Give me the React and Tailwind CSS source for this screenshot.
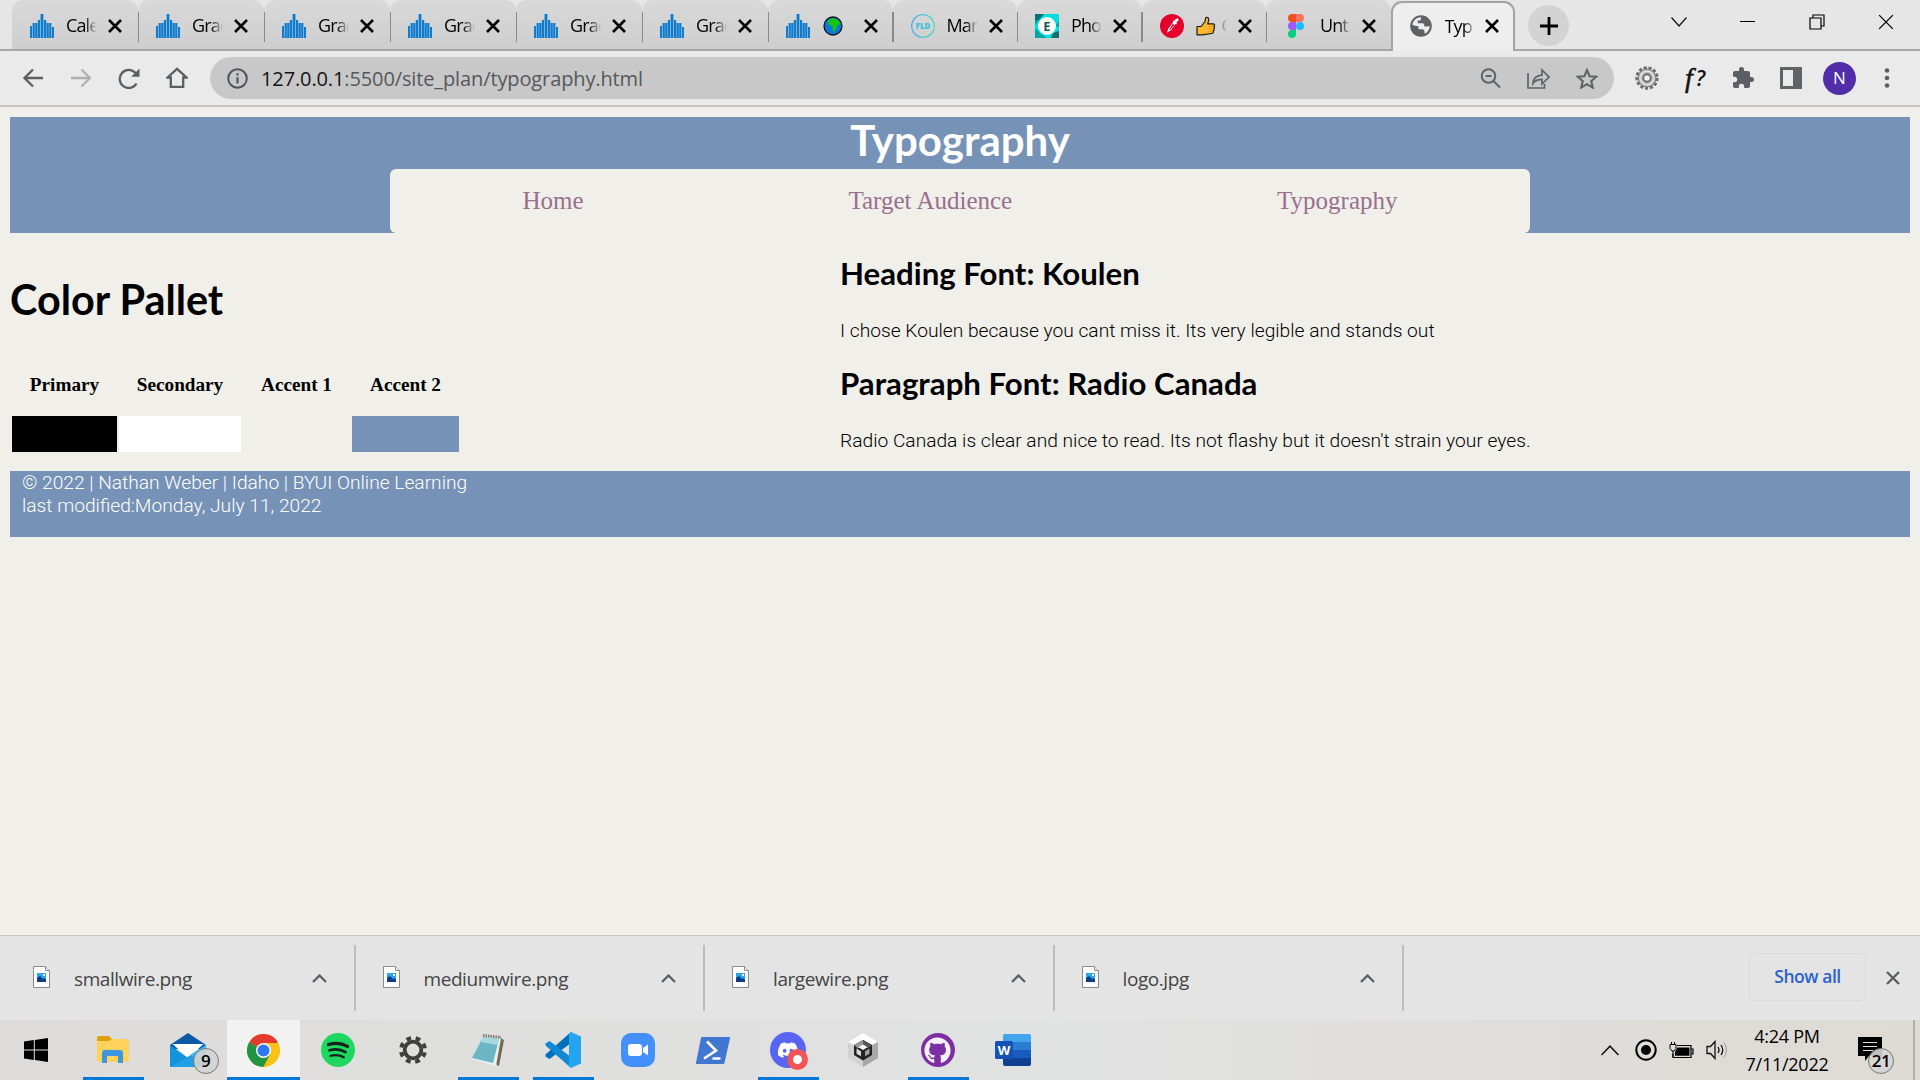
import React from "react";
import { FaGithub, FaDiscord } from "react-icons/fa";

const seg = "font-['Open_Sans','Noto_Sans',sans-serif]";

function CanvasBars() {
  return (
    <svg width="24" height="24" viewBox="0 0 24 24" fill="#0d7ccf">
      <path d="M0 12h2v12H0zM2.6 9h2.2v15H2.6zM5.2 9h2.2v15H5.2zM7.8 6h2.2v18H7.8zM10.6 0h2.8v24h-2.8zM14 6h2.2v18H14zM16.6 9h2.2v15h-2.2zM19.2 9h2.2v15h-2.2zM22 13h2v11h-2z" />
    </svg>
  );
}

function Globe() {
  return (
    <svg className="ml-[1px]" width="20" height="20" viewBox="0 0 20 20">
      <circle cx="10" cy="10" r="9" fill="#0b78d8" stroke="#111" strokeWidth="1.3" />
      <path d="M6 3.5l4-1.5 5 2 2.5 4-3 1-1 3-2.5 4-1.5-2V10L6 9 5 6z" fill="#16c60c" />
    </svg>
  );
}

function Fld() {
  return (
    <svg width="24" height="24" viewBox="0 0 24 24">
      <defs>
        <linearGradient id="fld">
          <stop stopColor="#4ea8ee" />
          <stop offset="1" stopColor="#46e0b8" />
        </linearGradient>
      </defs>
      <circle cx="12" cy="12" r="11.3" fill="none" stroke="url(#fld)" strokeWidth="1.3" />
      <text x="12" y="14.8" textAnchor="middle" fontSize="8" fontWeight="800" fontFamily="Open Sans" fill="#43c0dc">FLD</text>
    </svg>
  );
}

function EIcon() {
  return (
    <svg width="24" height="24" viewBox="0 0 24 24">
      <path fill="#00e0e0" d="M0 0h24v24H0z" />
      <path fill="#0f6e70" d="M0 0h9L4 6l-4 1zM24 24h-8l2-5 6-2z" />
      <path fill="#00a6a2" d="M0 7v4l4-4zM0 14v10h12l-6-4zM20 12l4-5v6z" />
      <circle cx="12" cy="12" r="9" fill="#fff" />
      <text x="12" y="16.600" textAnchor="middle" fontSize="13" fontWeight="700" fontFamily="Open Sans" fill="#17595b">E</text>
    </svg>
  );
}

function Dropper() {
  return (
    <svg width="24" height="24" viewBox="0 0 24 24">
      <circle cx="12" cy="12" r="12" fill="#e4002b" />
      <path d="M18.5 4.800c-1.500-.8-3 0-4 2l-1-.3-.8 1.200.6.6-4.600 5.600-1.900 4.800 4.400-2.700 4.300-6 .7.5.8-1.300-.6-.8c1.500-.9 2.600-2.200 2.100-3.600z" fill="#fff" />
      <path d="M12.800 9.800l1.600 1.200-4 4.600-1.400.6z" fill="#e4002b" />
    </svg>
  );
}

function Thumb() {
  return (
    <svg className="shrink-0" width="20" height="20" viewBox="0 0 20 20">
      <path d="M1 10.500h4.200L9 5.500 9.800 1.500c1.800-.8 3.200.6 2.900 2.600l-.9 3.700h5.400c1.600 0 1.800 2 .7 2.600.9.700.7 2-.2 2.400.7.800.4 1.900-.4 2.300.3 1.300-.3 2.300-1.800 2.400L6.500 18.800H1z" fill="#fdb92e" stroke="#1a1a1a" strokeWidth="1.200" strokeLinejoin="round" />
      <path d="M12.500 10.500h5M12.500 13h5M12.500 15.400h4.500" stroke="#d9861b" strokeWidth=".7" />
    </svg>
  );
}

function Figma() {
  return (
    <svg width="16" height="24" viewBox="0 0 16 24">
      <path d="M4 0h4v8H4a4 4 0 010-8z" fill="#f24e1e" />
      <path d="M8 0h4a4 4 0 010 8H8z" fill="#ff7262" />
      <path d="M4 8h4v8H4a4 4 0 010-8z" fill="#a259ff" />
      <circle cx="12" cy="12" r="4" fill="#1abcfe" />
      <path d="M4 16h4v4a4 4 0 11-4-4z" fill="#0acf83" />
    </svg>
  );
}

function Earth() {
  return (
    <svg className="shrink-0" width="26" height="26" viewBox="0 0 24 24" fill="#5f6368">
      <path d="M12 2C6.480 2 2 6.480 2 12s4.480 10 10 10 10-4.480 10-10S17.520 2 12 2zm8 10c0 3-1.800 5.800-4.500 7.200l-.4-2.600c-.1-.9-.9-1.600-1.800-1.600H11c-.8 0-1.500-.7-1.500-1.500V12H7.200L4.100 10.800C4.700 7 8 4 12 4v1.500c0 .8-.7 1.500-1.500 1.500H9v2.500h4.500c.8 0 1.500.7 1.500 1.500v1.500h2.500c.9 0 1.600-.4 2.500-.5z" />
    </svg>
  );
}

function Cross({ size = 14, w = 2.6, color = "#000" }) {
  return (
    <svg width={size} height={size} viewBox="0 0 14 14" stroke={color} strokeWidth={w} fill="none">
      <path d="M1 1l12 12M13 1L1 13" />
    </svg>
  );
}

function Tab({ icon, label, wide, last, active }) {
  return (
    <div
      className={
        (wide ? "w-[126px]" : "w-[124.5px]") +
        " relative flex shrink-0 items-center rounded-t-[11px] " +
        (active
          ? "z-10 mt-[1px] h-[50px] border-2 border-b-0 border-[#a3a3a3] bg-[#eeeeee] pb-[2px] pl-4"
          : "h-[49px] bg-linear-to-b from-[#d9d9d9] to-[#cecece] pl-[18px] pt-[2px]")
      }
    >
      <span className="flex w-6 shrink-0 justify-center">{icon}</span>
      <span className={seg + " ml-3 w-[31px] overflow-hidden whitespace-nowrap text-[18px] tracking-[-0.9px] text-black [mask-image:linear-gradient(to_right,black_60%,transparent)]"}>
        {label}
      </span>
      <span className={active ? "ml-[9px] flex" : "ml-[11px] flex"}>
        <Cross />
      </span>
      {!active && !last && <span className="absolute -right-[1px] top-3 z-10 h-[30px] w-[1.5px] bg-[#8a8a8a]" />}
    </div>
  );
}

function TabStrip() {
  return (
    <div className="relative flex h-[51px] bg-[#e6e6e6] pl-3">
      <div className="absolute inset-x-0 bottom-0 h-[2px] bg-[#a5a5a5]" />
      <Tab wide icon={<CanvasBars />} label="Cale" />
      <Tab wide icon={<CanvasBars />} label="Grad" />
      <Tab wide icon={<CanvasBars />} label="Grad" />
      <Tab wide icon={<CanvasBars />} label="Grad" />
      <Tab wide icon={<CanvasBars />} label="Grad" />
      <Tab wide icon={<CanvasBars />} label="Grad" />
      <Tab icon={<CanvasBars />} label={<Globe />} />
      <Tab icon={<Fld />} label="Mar" />
      <Tab icon={<EIcon />} label="Pho" />
      <Tab icon={<Dropper />} label={<span className="flex items-center gap-[6px]"><Thumb />C</span>} />
      <Tab last icon={<Figma />} label="Unt" />
      <Tab active icon={<Earth />} label="Typ" />
      <div className="ml-[13px] mt-[5px] flex size-[41px] items-center justify-center rounded-full bg-[#d3d3d3]">
        <svg width="18" height="18" viewBox="0 0 18 18" stroke="#000" strokeWidth="2.800"><path d="M9 0v18M0 9h18" /></svg>
      </div>
      <div className="ml-auto flex h-[43px] items-center">
        <span className="flex w-[69px] justify-center"><svg width="16" height="10" viewBox="0 0 16 10" fill="none" stroke="#111" strokeWidth="1.200"><path d="M.5.5L8 9 15.500.5" /></svg></span>
        <span className="flex w-[69px] justify-center"><span className="h-[1px] w-[15px] bg-black" /></span>
        <span className="flex w-[69px] justify-center"><svg width="16" height="16" viewBox="0 0 16 16" fill="none" stroke="#000" strokeWidth="1.200"><path d="M1 4h11v11H1zM4 4V1h11v11h-3" /></svg></span>
        <span className="flex w-[69px] justify-center"><Cross size={16} w={1.1} /></span>
      </div>
    </div>
  );
}

function Toolbar() {
  return (
    <div className="flex h-[56px] items-center border-b-2 border-[#c6c7c6] bg-[#eaeaea]">
      <svg className="ml-[22px]" width="22" height="20" viewBox="0 0 22 20" fill="none" stroke="#5b5f64" strokeWidth="2.300"><path d="M21 10H3M11 1.500L2.500 10l8.500 8.500" /></svg>
      <svg className="ml-[27px]" width="22" height="20" viewBox="0 0 22 20" fill="none" stroke="#b0b0b0" strokeWidth="2.300"><path d="M0 10h18M10.500 1.500L19 10l-8.500 8.500" /></svg>
      <svg className="ml-[25px]" width="22" height="21" viewBox="0 0 22 21" fill="none" stroke="#5b5f64" strokeWidth="2.300"><path d="M18.500 15.500A9 9 0 1117.500 5" /><path d="M21.500.5v8.300h-8.300z" fill="#5b5f64" stroke="none" /></svg>
      <svg className="ml-[26px]" width="22" height="22" viewBox="0 0 22 22" fill="none" stroke="#5b5f64" strokeWidth="2.300"><path d="M1.500 10.500L11 1.800l9.500 8.700h-3.300v9.300H4.800v-9.300z" /></svg>
      <div className="ml-[22px] flex h-[42px] w-[1404px] items-center rounded-full bg-[#c8c8c8] pl-[17px]">
        <svg width="21" height="21" viewBox="0 0 21 21" fill="none" stroke="#505458" strokeWidth="2"><circle cx="10.500" cy="10.500" r="9.300" /><path d="M10.500 9.300v6.200M10.500 5.200v2.300" strokeWidth="2.200" /></svg>
        <span className={seg + " ml-[13px] whitespace-nowrap pt-[1px] text-[20px] tracking-[-0.120px] text-[#55585c]"}><span className="text-[#151515]">127.0.0.1</span>:5500/site_plan/typography.html</span>
        <div className="ml-auto flex items-center gap-[26px] pr-4 text-[#5f6368]">
          <svg width="21" height="21" viewBox="0 0 21 21" fill="none" stroke="currentColor" strokeWidth="2"><circle cx="8.500" cy="8" r="6.800" /><path d="M13.500 13l6.500 6.500M5.500 8h6" /></svg>
          <svg width="23" height="21" viewBox="0 0 23 21" fill="none" stroke="currentColor" strokeWidth="1.700"><path d="M1 5v15h16.500v-4M6 15.500c.4-5.500 3.500-8 9-8.300V2l7 7-7 7v-4.600c-4 0-6.800 1-9 4.100z" /></svg>
          <svg width="22" height="21" viewBox="0 0 22 21" fill="none" stroke="currentColor" strokeWidth="2.100"><path d="M11 2l2.600 6.200 6.700.5-5.100 4.400 1.600 6.500L11 16.200l-5.800 3.400 1.600-6.500-5.100-4.400 6.700-.5z" /></svg>
        </div>
      </div>
      <svg className="ml-[21px]" width="24" height="24" viewBox="0 0 24 24">
        <circle cx="12" cy="12" r="10" fill="none" stroke="#6c6c6c" strokeWidth="3.400" strokeDasharray="3 1.833" />
        <circle cx="12" cy="12" r="9" fill="#b0b0b0" stroke="#777" />
        <circle cx="12" cy="12" r="6.800" fill="none" stroke="#e0e0e0" strokeWidth="1.800" />
        <circle cx="12" cy="12" r="3.600" fill="#f2f2f2" stroke="#666" strokeWidth="1.600" />
      </svg>
      <span className="ml-[23px] flex w-[26px] items-center justify-center gap-[3px] whitespace-nowrap leading-none text-[#111]"><i className="font-['Liberation_Serif',serif] text-[28px] [-webkit-text-stroke:0.5px_#111]">f</i><span className="font-['Open_Sans',sans-serif] text-[21px] font-semibold italic">?</span></span>
      <svg className="ml-[23px]" width="24" height="24" viewBox="0 0 24 24" fill="#5b5f64"><path d="M20.500 11H19V7c0-1.100-.9-2-2-2h-4V3.500a2.500 2.500 0 00-5 0V5H4c-1.100 0-2 .9-2 2v3.800h1.500a2.700 2.700 0 010 5.400H2V20c0 1.100.9 2 2 2h3.800v-1.500a2.700 2.700 0 015.400 0V22H17c1.100 0 2-.9 2-2v-4h1.500a2.500 2.500 0 000-5z" /></svg>
      <svg className="ml-[25px]" width="22" height="22" viewBox="0 0 22 22"><path fillRule="evenodd" d="M0 0h22v22H0zM3 3v16h10V3z" fill="#5f6368" /></svg>
      <span className={seg + " ml-[21px] flex size-[33px] items-center justify-center rounded-full bg-[#512da8] text-[17px] text-white"}>N</span>
      <svg className="ml-[28px]" width="6" height="20" viewBox="0 0 6 20" fill="#5b5f64"><circle cx="3" cy="2.500" r="2.300" /><circle cx="3" cy="10" r="2.300" /><circle cx="3" cy="17.500" r="2.300" /></svg>
    </div>
  );
}

const lato = "font-['Lato',sans-serif] font-bold whitespace-nowrap";
const para = "font-['Roboto',sans-serif] text-[19.2px] font-light leading-[30px] whitespace-nowrap";

function Page() {
  return (
    <div className="h-[828px] bg-[#f0efea] px-[10px] pt-[10px]">
      <header className="h-[116px] bg-[#7692b6]">
        <h1 className={lato + " h-[52px] text-center text-[42px] leading-[46px] text-white"}>Typography</h1>
        <nav className="mx-auto flex h-16 w-[1140px] items-center justify-around rounded-[6px] bg-[#f0efea] font-['Liberation_Serif',serif] text-[25px] text-[#996f8e]">
          <span>Home</span>
          <span>Target Audience</span>
          <span>Typography</span>
        </nav>
      </header>
      <main className="flex h-[238px]">
        <section className="w-[830px]">
          <h2 className={lato + " mt-[41px] text-[41.400px] leading-[50px]"}>Color Pallet</h2>
          <div className="ml-[2px] mt-[44px] grid grid-cols-[105px_122px_107px_107px] gap-x-[2px] text-center font-['Liberation_Serif',serif] text-[19.2px] font-bold leading-[34px]">
            <span>Primary</span>
            <span>Secondary</span>
            <span>Accent 1</span>
            <span>Accent 2</span>
            <span className="mt-[14px] h-9 bg-black" />
            <span className="mt-[14px] h-9 bg-white" />
            <span className="mt-[14px] h-9" />
            <span className="mt-[14px] h-9 bg-[#7692b6]" />
          </div>
        </section>
        <section className="pt-[20px]">
          <h3 className={lato + " text-[31.200px] leading-[40px]"}>Heading Font: Koulen</h3>
          <p className={para + " mt-[23px]"}>I chose Koulen because you cant miss it. Its very legible and stands out</p>
          <h3 className={lato + " mt-[17px] text-[31.200px] leading-[40px]"}>Paragraph Font: Radio Canada</h3>
          <p className={para + " mt-[23px]"}>Radio Canada is clear and nice to read. Its not flashy but it doesn't strain your eyes.</p>
        </section>
      </main>
      <footer className="h-[66px] bg-[#7692b6] pl-[12px] font-['Roboto',sans-serif] text-[19.200px] font-light leading-[23px] text-white">
        <p>© 2022 | Nathan Weber | Idaho | BYUI Online Learning</p>
        <p>last modified:Monday, July 11, 2022</p>
      </footer>
    </div>
  );
}

function Download({ name }) {
  return (
    <div className="flex h-[66px] w-[349.500px] items-center border-r-2 border-[#bdbdbd] pl-[27px] pr-[27px]">
      <svg className="-mt-[2px]" width="17" height="22" viewBox="0 0 17 22">
        <path d="M.5.5h12l4 4v17H.5z" fill="#fff" stroke="#8a8a8a" />
        <path d="M12.500.5v4h4" fill="#eee" stroke="#8a8a8a" />
        <path d="M4 7h9v9H4z" fill="#2aa5ea" />
        <path d="M4 12l3-2 3 3 1.500-1L13 14v2H4z" fill="#0e3d86" />
        <path d="M10 8h2v2h-2z" fill="#fff" />
      </svg>
      <span className={seg + " ml-[24px] pt-[2px] text-[19px] tracking-[-0.420px] text-[#444]"}>{name}</span>
      <svg className="ml-auto" width="15" height="9" viewBox="0 0 15 9" fill="none" stroke="#5b5f64" strokeWidth="2.300"><path d="M1 8l6.500-6.500L14 8" /></svg>
    </div>
  );
}

function Downloads() {
  return (
    <div className="flex h-[85px] items-center border-t border-[#c4c4c4] bg-[#e4e4e4] pl-[6px]">
      <Download name="smallwire.png" />
      <Download name="mediumwire.png" />
      <Download name="largewire.png" />
      <Download name="logo.jpg" />
      <span className={seg + " -mt-[2px] ml-auto flex h-[48px] w-[117px] items-center justify-center rounded-[5px] border border-[#dadada] pb-[1px] text-[17.500px] font-semibold tracking-[-0.450px] text-[#2a62c9]"}>Show all</span>
      <span className="ml-5 mr-5 flex"><Cross color="#5b5f64" w={2.400} /></span>
    </div>
  );
}

function Slot({ children, open, active }) {
  return (
    <div className={"relative flex h-[60px] shrink-0 items-center justify-center " + (active ? "ml-[2px] w-[73px] bg-[#f2f2f2]" : "w-[75px]")}>
      {children}
      {open && <span className="absolute bottom-0 left-2 h-[3px] w-[61px] bg-[#0078d7]" />}
      {active && <span className="absolute inset-x-0 bottom-0 h-[3px] bg-[#0078d7]" />}
    </div>
  );
}

function Badge({ n }) {
  return (
    <span className={seg + " absolute flex size-[26px] items-center justify-center rounded-full border border-[#777] bg-[#d4d4d4]/90 text-[17px] font-semibold tracking-[-0.500px] text-black"}>{n}</span>
  );
}

function Taskbar() {
  return (
    <div className="flex h-[60px] items-center bg-linear-to-r from-[#dddcda] via-[#e1e2e2] via-55% to-[#dedad4]">
      <div className="ml-[24px] flex w-[51px]">
        <svg width="24" height="24" viewBox="0 0 24 24"><path d="M0 3.400L9.800 2v9.400H0zM10.800 1.900L24 0v11.400H10.800zM0 12.400h9.800V22L0 20.500zM10.800 12.400H24V24l-13.200-1.900z" /></svg>
      </div>
      <Slot open>
        <svg width="32" height="28" viewBox="0 0 32 28">
          <path d="M0 2a2 2 0 012-2h10l3 3-2 4H0z" fill="#e0a008" />
          <path d="M0 5h12l3-2h15a2 2 0 012 2v19a2 2 0 01-2 2H2a2 2 0 01-2-2z" fill="#ffd25e" />
          <path d="M5 27V17a3 3 0 013-3h15a3 3 0 013 3v10h-5v-7H10v7z" fill="#3c97e0" />
        </svg>
      </Slot>
      <Slot>
        <svg width="36" height="34" viewBox="0 0 36 34">
          <path d="M0 12L18 0l18 12v4H0z" fill="#0d58a6" />
          <path d="M2.500 11h31L18 25z" fill="#fff" />
          <path d="M0 12l18 13v9H0z" fill="#1592dc" />
          <path d="M36 12L16 25l-16 9h36z" fill="#1f9fe4" />
          <path d="M36 12v18L20 22z" fill="#31c1f2" />
        </svg>
        <span className="relative top-[11px] flex w-0 items-center justify-center"><Badge n="9" /></span>
      </Slot>
      <Slot active>
        <svg width="33" height="33" viewBox="0 0 48 48">
          <circle cx="24" cy="24" r="24" fill="#fbc116" />
          <path d="M24 24L3.200 12A24 24 0 0144.800 12z" fill="#e33b2e" />
          <path d="M3.200 12A24 24 0 0024 48l10.400-18L24 24z" fill="#229342" />
          <path d="M24 13h21.200A24 24 0 0124 48l9.500-18.500z" fill="#fbc116" />
          <circle cx="24" cy="24" r="11" fill="#fff" />
          <circle cx="24" cy="24" r="8.800" fill="#2f77ee" />
        </svg>
      </Slot>
      <Slot>
        <svg width="34" height="34" viewBox="0 0 34 34" fill="none" stroke="#15231a" strokeLinecap="round">
          <circle cx="17" cy="17" r="17" fill="#1ed760" stroke="none" />
          <path d="M7.500 11.500c7-2 13.500-1.300 19 1.900" strokeWidth="3.200" />
          <path d="M8.500 17.300c6-1.700 11.500-1 16 1.800" strokeWidth="2.700" />
          <path d="M9.500 22.800c5-1.200 9.500-.7 13.300 1.500" strokeWidth="2.200" />
        </svg>
      </Slot>
      <Slot>
        <svg width="28" height="28" viewBox="0 0 28 28" fill="none" stroke="#3e3e3e">
          <circle cx="14" cy="14" r="12" strokeWidth="4" strokeDasharray="4.700 4.725" strokeDashoffset="7.060" />
          <circle cx="14" cy="14" r="8.300" strokeWidth="3.800" />
        </svg>
      </Slot>
      <Slot open>
        <svg width="34" height="34" viewBox="0 0 34 34">
          <path d="M28 4l5 3-5 26-4-2z" fill="#7a6a4c" />
          <path d="M12 3l18 2-5 28L1 26z" fill="#e9f3f4" />
          <path d="M12 4l16 2-6 24L1 25z" fill="#6cb7c5" />
          <path d="M12 4l16 2-1.500 6L10 9z" fill="#a9d8de" />
          <path d="M12 2.500l18 2" stroke="#777" strokeWidth="3" strokeDasharray="1.500 1" />
        </svg>
      </Slot>
      <Slot open>
        <svg width="36" height="36" viewBox="0 0 36 36">
          <path d="M26 0v11L4.500 27 .5 24.500v-2z" fill="#0070bb" />
          <path d="M26 36V25L4.500 9 .5 11.500v2z" fill="#1088d3" />
          <path d="M26 0l10 4.500v27L26 36l-2-1.500V1.500z" fill="#24a5f1" />
        </svg>
      </Slot>
      <Slot>
        <svg width="34" height="34" viewBox="0 0 34 34">
          <rect width="34" height="34" rx="10" fill="#4390fd" />
          <rect x="7" y="11" width="14" height="12" rx="3" fill="#fff" />
          <path d="M22 15l5-3.500v11L22 19z" fill="#fff" />
        </svg>
      </Slot>
      <Slot>
        <svg width="34" height="27" viewBox="0 0 34 27">
          <path d="M6 0h27a1 1 0 011 1.300l-5.500 24.500A1.500 1.500 0 0127 27H1a1 1 0 01-1-1.300L5 1a1 1 0 011-1z" fill="#3f77d3" />
          <path d="M11 4.500l9 9L8 21.500M16.500 21.500h8" fill="none" stroke="#fff" strokeWidth="2.700" />
        </svg>
      </Slot>
      <Slot open>
        <span className="flex size-9 items-center justify-center rounded-full bg-[#5865f2]"><FaDiscord color="#fff" size={22} /></span>
        <span className="absolute left-[37px] top-[29px] size-[21px] rounded-full border-[6px] border-[#f25555] bg-white" />
      </Slot>
      <Slot>
        <svg width="30" height="34" viewBox="0 0 30 34">
          <path d="M15 0l15 9v16l-15 9-15-9V9z" fill="#d2d2d2" />
          <path d="M15 0l15 9-15 8L0 9z" fill="#fcfcfc" />
          <path d="M30 9v16l-15 9V17z" fill="#a8a8a8" />
          <path d="M15 7l9 5v10l-9 5.500L6 22V12z" fill="#222" />
          <path d="M15 7v6l-5 2.500-4-3.500z" fill="#999" />
          <path d="M15 7v6l5 2.500 4-3.500z" fill="#555" />
          <path d="M15 11.500l4.500 2.700L15 17l-4.500-2.800z" fill="#fff" />
          <path d="M8.500 15.500l4.500 2.800v5l-4.500-2.600z" fill="#d8d8d8" />
          <path d="M21.500 15.500L17 18.300v5l4.500-2.600z" fill="#a0a0a0" />
        </svg>
      </Slot>
      <Slot open>
        <span className="flex size-[34px] items-center justify-center rounded-full bg-[#7b2fa3]"><FaGithub color="#f5f0f8" size={27} /></span>
      </Slot>
      <Slot>
        <svg width="36" height="32" viewBox="0 0 36 32">
          <path d="M8 2a2 2 0 012-2h24a2 2 0 012 2v6H8z" fill="#41a5ee" />
          <path d="M8 8h28v8H8z" fill="#2b7cd3" />
          <path d="M8 16h28v8H8z" fill="#185abd" />
          <path d="M8 24h28v6a2 2 0 01-2 2H10a2 2 0 01-2-2z" fill="#103f91" />
          <rect y="7" width="18" height="18" rx="1.500" fill="#1552b4" />
          <text x="9" y="20.500" textAnchor="middle" fontFamily="Open Sans" fontWeight="700" fontSize="13" fill="#fff">W</text>
        </svg>
      </Slot>
      <div className="ml-auto flex items-center">
        <svg width="18" height="11" viewBox="0 0 18 11" fill="none" stroke="#111" strokeWidth="1.500"><path d="M.5 10L9 1.200 17.500 10" /></svg>
        <svg className="ml-[16px]" width="22" height="22" viewBox="0 0 22 22"><circle cx="11" cy="11" r="9.700" fill="none" stroke="#000" strokeWidth="2" /><circle cx="11" cy="11" r="5" /></svg>
        <svg className="ml-[12px]" width="25" height="18" viewBox="0 0 25 18"><path d="M8 4.500h14v12H4v-4M22 8h2v5h-2" fill="none" stroke="#000" strokeWidth="1.200" /><path d="M8.500 6.500h12v8.300H6V11z" /><path d="M1 3.500h6v4L5 10H3L1 7.500zM2.500 3.500V1M5.500 3.500V1M4 10v6" fill="#ddd" stroke="#000" /></svg>
        <svg className="ml-[12px]" width="23" height="20" viewBox="0 0 23 20" fill="none" stroke="#111" strokeWidth="1.300"><path d="M1 6.500h3.500L9 1.500v17l-4.500-5H1zM12 7q2 3 0 6M15 5q3.500 5 0 10" /><path d="M18 2.500q5 7.500 0 15" stroke="#aaa" /></svg>
        <div className={seg + " ml-[10px] mr-[1px] w-[96px] whitespace-nowrap text-center text-[18px] leading-[28px] tracking-[-0.250px] text-black"}>
          <p>4:24 PM</p>
          <p>7/11/2022</p>
        </div>
        <div className="relative ml-[22px] mr-[31px] h-[26px] w-6">
          <svg width="24" height="26" viewBox="0 0 24 26"><path d="M0 0h24v19h-13l-4 5v-5H0z" /><path d="M5 5.500h14M5 9.500h14M5 13.500h10" stroke="#e0e0e0" strokeWidth="1.200" /></svg>
          <span className="absolute left-[23px] top-[24px] flex items-center justify-center"><Badge n="21" /></span>
        </div>
        <span className="mr-[5px] h-[60px] w-[2px] bg-[#b2afab]" />
      </div>
    </div>
  );
}

export default function App() {
  return (
    <div className="flex h-[1080px] w-[1920px] flex-col overflow-hidden bg-[#f0efea] text-black">
      <TabStrip />
      <Toolbar />
      <Page />
      <Downloads />
      <Taskbar />
    </div>
  );
}
